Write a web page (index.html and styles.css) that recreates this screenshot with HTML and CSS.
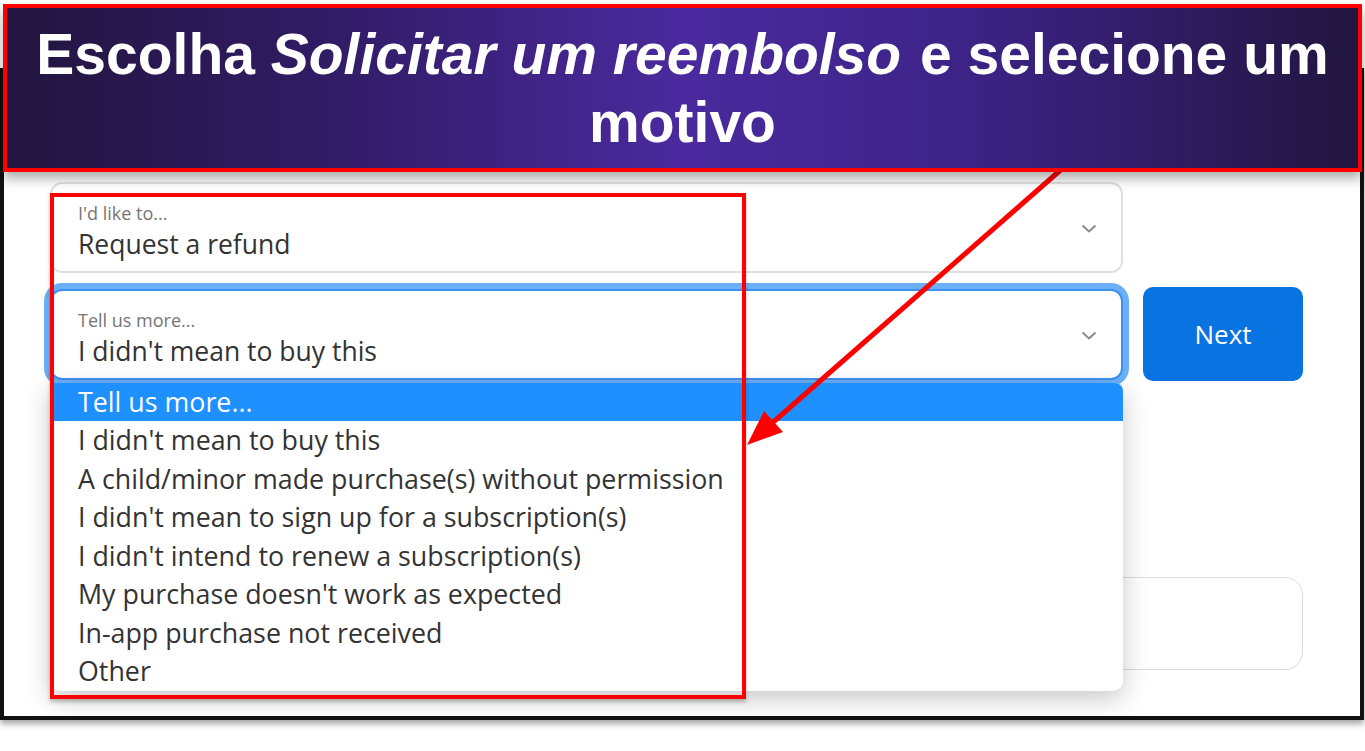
FILE: index.html
```html
<!DOCTYPE html>
<html lang="en">
<head>
    <meta charset="UTF-8">
    <meta name="viewport" content="width=device-width, initial-scale=1.0">
    <title>Request a refund</title>
    <link rel="stylesheet" href="styles.css">
</head>
<body>
    <!-- Screenshot frame -->
    <div class="shot">
        <form class="refund-form">
            <div class="field">
                <span class="field-label">I'd like to...</span>
                <span class="field-value">Request a refund</span>
                <svg class="chevron" width="16" height="9" viewBox="0 0 16 9"><path d="M1.5 1.5 L8 7.5 L14.5 1.5" fill="none" stroke="#8a8a8a" stroke-width="2"/></svg>
            </div>

            <div class="field-wrap">
                <div class="field focused">
                    <span class="field-label">Tell us more...</span>
                    <span class="field-value">I didn't mean to buy this</span>
                    <svg class="chevron" width="16" height="9" viewBox="0 0 16 9"><path d="M1.5 1.5 L8 7.5 L14.5 1.5" fill="none" stroke="#8a8a8a" stroke-width="2"/></svg>
                </div>

                <!-- Open dropdown -->
                <ul class="menu">
                    <li class="active">Tell us more...</li>
                    <li>I didn't mean to buy this</li>
                    <li>A child/minor made purchase(s) without permission</li>
                    <li>I didn't mean to sign up for a subscription(s)</li>
                    <li>I didn't intend to renew a subscription(s)</li>
                    <li>My purchase doesn't work as expected</li>
                    <li>In-app purchase not received</li>
                    <li>Other</li>
                </ul>
            </div>

            <button type="button" class="next-btn">Next</button>

            <div class="notes"></div>
        </form>
    </div>

    <!-- Annotation -->
    <div class="callout">
        <h1>Escolha <em>Solicitar um reembolso</em> e selecione um motivo</h1>
    </div>
    <div class="highlight-box"></div>
    <svg class="pointer" width="1365" height="751" viewBox="0 0 1365 751">
        <line x1="1072" y1="160" x2="771" y2="424" stroke="#ff0000" stroke-width="5"/>
        <polygon points="747,445 764,411 783,432" fill="#ff0000"/>
    </svg>
</body>
</html>
```

FILE: styles.css
```css
body {
    margin: 0;
    background-color: #fff;
    position: relative;
    width: 1365px;
    height: 751px;
    overflow: hidden;
}

.shot {
    margin: 68px 1px 0 0;
    height: 644px;
    border: 4px solid #111;
    background-color: #fff;
    box-shadow: 0 4px 6px rgba(0, 0, 0, 0.35);
}

.refund-form {
    display: grid;
    grid-template-columns: 1073px 160px;
    column-gap: 20px;
    row-gap: 14px;
    padding: 110px 0 0 46px;
    font-family: "Open Sans", "Noto Sans", sans-serif;
    color: #333;
}

.field {
    position: relative;
    display: flex;
    flex-direction: column;
    gap: 4px;
    height: 91px;
    box-sizing: border-box;
    padding: 18px 26px 0;
    border: 2px solid #e0e0e0;
    border-radius: 12px;
    background-color: #fff;
}

.field.focused {
    border-color: #3d8ff0;
    box-shadow: 0 0 0 6px #6aaff7;
}

.field-label {
    font-size: 18px;
    line-height: 22px;
    color: #757575;
}

.field-value {
    font-size: 26.5px;
    line-height: 32px;
}

.chevron {
    position: absolute;
    right: 24px;
    top: 40px;
}

.field-wrap {
    position: relative;
    grid-column: 1;
    align-self: center;
}

.menu {
    position: absolute;
    top: 94px;
    left: 0;
    right: 0;
    margin: 0;
    padding: 0;
    list-style: none;
    background-color: #fff;
    border-radius: 0 8px 10px 10px;
    overflow: hidden;
    box-shadow: 0 8px 26px rgba(0, 0, 0, 0.22);
    z-index: 2;
}

.menu li {
    height: 38.5px;
    line-height: 38.5px;
    padding-left: 28px;
    font-size: 26.8px;
    color: #333;
    white-space: nowrap;
}

.menu li.active {
    background-color: #1e90ff;
    color: #fff;
}

.next-btn {
    grid-column: 2;
    height: 94px;
    border: none;
    border-radius: 10px;
    background-color: #0a73e2;
    color: #fff;
    font-family: "Open Sans", "Noto Sans", sans-serif;
    font-size: 26px;
    cursor: pointer;
}

.notes {
    grid-column: 1 / -1;
    margin-top: 182px;
    height: 93px;
    box-sizing: border-box;
    border: 1.5px solid #dcdcdc;
    border-radius: 18px;
}

.callout {
    position: absolute;
    top: 4px;
    left: 3px;
    width: 1359px;
    box-sizing: border-box;
    border: 4px solid #ff0000;
    background: linear-gradient(90deg, #22153f 0%, #2f1b62 22%, #4a2a9e 50%, #3b2385 72%, #22153f 100%);
    box-shadow: 0 6px 12px rgba(0, 0, 0, 0.35);
    z-index: 5;
}

.callout h1 {
    margin: 0;
    padding: 12px 0;
    font-family: "Liberation Sans", Arial, sans-serif;
    font-size: 57px;
    line-height: 68px;
    font-weight: bold;
    text-align: center;
    color: #fff;
}

.callout em {
    padding-right: 3px;
}

.highlight-box {
    position: absolute;
    left: 50px;
    top: 193px;
    width: 696px;
    height: 506px;
    box-sizing: border-box;
    border: 4px solid #ff0000;
    box-shadow: 0 3px 4px rgba(0, 0, 0, 0.25);
    z-index: 3;
}

.pointer {
    position: absolute;
    left: 0;
    top: 0;
    z-index: 4;
}
```
